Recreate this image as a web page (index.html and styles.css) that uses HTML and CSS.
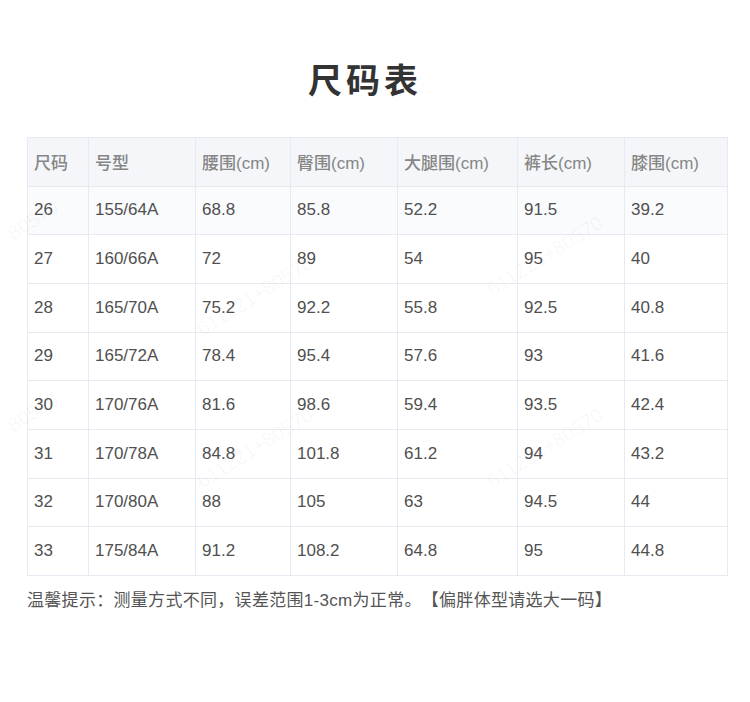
FILE: index.html
```html
<!DOCTYPE html>
<html lang="zh-CN">
<head>
<meta charset="utf-8">
<title>尺码表</title>
<link rel="stylesheet" href="styles.css">
</head>
<body>
<div class="page">
  <h1 class="title">尺码表</h1>
  <table class="size-table">
    <colgroup>
      <col class="c1"><col class="c2"><col class="c3"><col class="c4"><col class="c5"><col class="c6"><col class="c7">
    </colgroup>
    <thead>
      <tr><th>尺码</th><th>号型</th><th>腰围(cm)</th><th>臀围(cm)</th><th>大腿围(cm)</th><th>裤长(cm)</th><th>膝围(cm)</th></tr>
    </thead>
    <tbody>
      <tr class="tint"><td>26</td><td>155/64A</td><td>68.8</td><td>85.8</td><td>52.2</td><td>91.5</td><td>39.2</td></tr>
      <tr><td>27</td><td>160/66A</td><td>72</td><td>89</td><td>54</td><td>95</td><td>40</td></tr>
      <tr><td>28</td><td>165/70A</td><td>75.2</td><td>92.2</td><td>55.8</td><td>92.5</td><td>40.8</td></tr>
      <tr><td>29</td><td>165/72A</td><td>78.4</td><td>95.4</td><td>57.6</td><td>93</td><td>41.6</td></tr>
      <tr><td>30</td><td>170/76A</td><td>81.6</td><td>98.6</td><td>59.4</td><td>93.5</td><td>42.4</td></tr>
      <tr><td>31</td><td>170/78A</td><td>84.8</td><td>101.8</td><td>61.2</td><td>94</td><td>43.2</td></tr>
      <tr><td>32</td><td>170/80A</td><td>88</td><td>105</td><td>63</td><td>94.5</td><td>44</td></tr>
      <tr><td>33</td><td>175/84A</td><td>91.2</td><td>108.2</td><td>64.8</td><td>95</td><td>44.8</td></tr>
    </tbody>
  </table>
  <p class="note">温馨提示：测量方式不同，误差范围1-3cm为正常。【偏胖体型请选大一码】</p>
</div>
<div class="wm wm1">80570</div>
<div class="wm wm2">611221+80570</div>
<div class="wm wm3">611221+80570</div>
<div class="wm wm4">80570</div>
<div class="wm wm5">611221+80570</div>
<div class="wm wm6">611221+80570</div>
</body>
</html>
```
FILE: styles.css
```css
html, body {
  margin: 0;
  padding: 0;
  background: #ffffff;
}
body {
  width: 750px;
  height: 702px;
  overflow: hidden;
  position: relative;
  font-family: "Liberation Sans", "Noto Sans CJK SC", sans-serif;
}
.page {
  padding: 0 23px 0 27px;
}
.title {
  margin: 0;
  padding: 54px 24px 0 0;
  height: 50px;
  line-height: 50px;
  text-align: center;
  font-family: "Noto Sans CJK SC", sans-serif;
  font-size: 34px;
  font-weight: 700;
  letter-spacing: 4px;
  color: #333333;
}
.size-table {
  margin-top: 33px;
  width: 700px;
  border-collapse: collapse;
  table-layout: fixed;
}
.c1 { width: 61px; }
.c2 { width: 107px; }
.c3 { width: 95px; }
.c4 { width: 107px; }
.c5 { width: 120px; }
.c6 { width: 107px; }
.c7 { width: 103px; }
.size-table tr {
  height: 48.67px;
}
.size-table th,
.size-table td {
  border: 1px solid #e7eaf1;
  padding: 0 0 0 6px;
  text-align: left;
  vertical-align: middle;
  font-size: 17px;
  white-space: nowrap;
}
.size-table th {
  background: #f4f6f9;
  color: #868686;
  font-weight: 500;
}
.size-table td {
  color: #505050;
}
.size-table tr.tint td {
  background: #fafbfd;
}
.note {
  margin: 13px 0 0 0;
  font-size: 17px;
  line-height: 24px;
  color: #555555;
  text-spacing-trim: space-all;
  letter-spacing: 0.3px;
}
.wm {
  position: absolute;
  font-size: 20px;
  color: rgba(0, 0, 0, 0.035);
  transform: rotate(-32deg);
  transform-origin: left bottom;
  pointer-events: none;
  white-space: nowrap;
}
.wm1 { left: 16px; top: 222px; }
.wm2 { left: 205px; top: 318px; }
.wm3 { left: 495px; top: 278px; }
.wm4 { left: 16px; top: 414px; }
.wm5 { left: 205px; top: 470px; }
.wm6 { left: 495px; top: 470px; }
```
